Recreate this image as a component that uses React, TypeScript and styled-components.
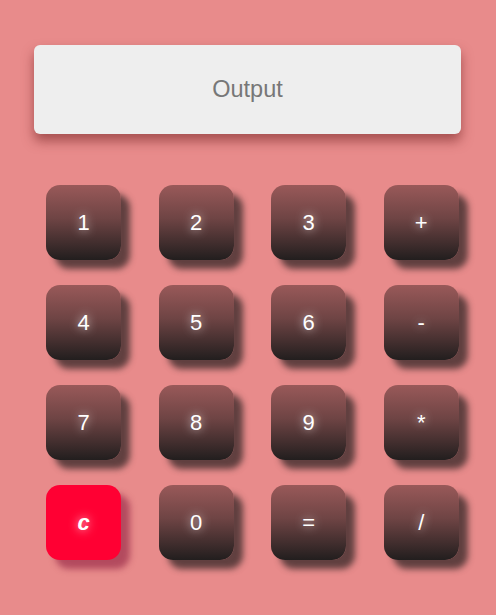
import React, {useState} from 'react';
import styled, {createGlobalStyle} from "styled-components";

const GlobalStyle = createGlobalStyle`
  html, body {
    margin: 0;
    padding: 0;
    background-color: #e88b8b;
  }
  body {
    font-family: "Liberation Sans", Arial, sans-serif;
  }
`

type KeyProps = {
    clear?: boolean
}

const Calc = styled.div`
  width: 496px;
  height: 615px;
  padding: 45px 35px 0 34px;
  box-sizing: border-box;
`
const Output = styled.div`
  width: 427px;
  height: 89px;
  background-color: #eeeeee;
  border-radius: 6px;
  box-shadow: 0 7px 12px rgba(120, 40, 40, 0.6);
  display: flex;
  align-items: center;
  justify-content: center;
  color: #777777;
  font-size: 23.5px;
`
const Keys = styled.div`
  display: grid;
  grid-template-columns: repeat(4, 75px);
  column-gap: 37.6px;
  row-gap: 25px;
  margin-top: 51px;
  padding-left: 12px;
`
const Key = styled.button<KeyProps>`
  width: 75px;
  height: 75px;
  border: none;
  border-radius: 14px;
  padding: 0;
  cursor: pointer;
  background: ${props => props.clear ? '#ff0033' : 'linear-gradient(to bottom, #995959, #6e4444 45%, #221e1e)'};
  box-shadow: 9px 9px 6px ${props => props.clear ? 'rgba(150, 40, 70, 0.65)' : 'rgba(45, 35, 35, 0.72)'};
  color: #ffffff;
  font-family: "Liberation Sans", Arial, sans-serif;
  font-size: 22px;
  font-weight: ${props => props.clear ? 'bold' : 'normal'};
  font-style: ${props => props.clear ? 'italic' : 'normal'};
  text-shadow: 0 0 10px rgba(255, 255, 255, 0.8);
`

const labels = ['1', '2', '3', '+', '4', '5', '6', '-', '7', '8', '9', '*', 'c', '0', '=', '/']

const App = () => {
    let [out, setOut] = useState('')

    const press = (k: string) => {
        if (k === 'c') {
            setOut('')
        } else if (k === '=') {
            try {
                // eslint-disable-next-line no-new-func
                setOut(String(Function('return ' + out)()))
            } catch (e) {
                setOut('')
            }
        } else {
            setOut(out + k)
        }
    }

    return (
        <Calc>
            <GlobalStyle/>
            <Output>{out === '' ? 'Output' : out}</Output>
            <Keys>
                {labels.map(k =>
                    <Key key={k} clear={k === 'c'} onClick={() => press(k)}>{k}</Key>
                )}
            </Keys>
        </Calc>
    );
};

export default App;
